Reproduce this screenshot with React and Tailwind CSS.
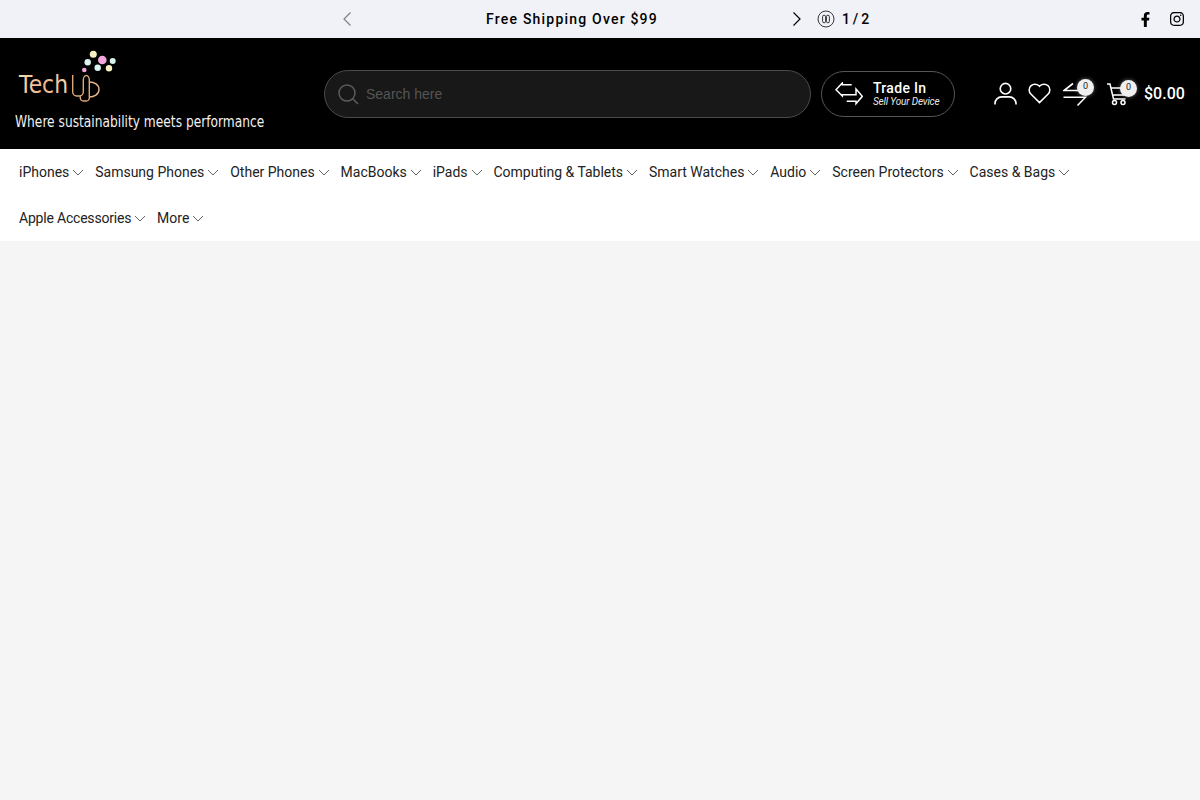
import React from 'react';
import { FaFacebookF, FaInstagram } from 'react-icons/fa';

const navItems = [
  'iPhones', 'Samsung Phones', 'Other Phones', 'MacBooks', 'iPads', 'Computing & Tablets',
  'Smart Watches', 'Audio', 'Screen Protectors', 'Cases & Bags', 'Apple Accessories', 'More',
];

const Chevron = ({ className, d }) => (
  <svg viewBox="0 0 12 16" fill="none" stroke="currentColor" strokeWidth="1.2" className={className}>
    <path d={d} />
  </svg>
);

const Logo = () => (
  <svg viewBox="0 0 104 58" className="w-[104px] h-[58px]" fill="none">
    <defs>
      <linearGradient id="techGrad" x1="0" x2="1" y1="0" y2="0">
        <stop offset="0" stopColor="#f0dfb4" />
        <stop offset="0.5" stopColor="#eeb48c" />
        <stop offset="1" stopColor="#f0d8b8" />
      </linearGradient>
    </defs>
    <circle cx="78.3" cy="6.3" r="3.5" fill="#f7efc0" />
    <circle cx="87.3" cy="12" r="4.3" fill="#f3a6dc" />
    <circle cx="72.7" cy="14.3" r="3.2" fill="#d9f3ef" />
    <circle cx="97.7" cy="13" r="3" fill="#d9f3ef" />
    <circle cx="82.7" cy="19.7" r="3.2" fill="#d9f3ef" />
    <circle cx="94" cy="20.3" r="3.2" fill="#f7efc0" />
    <circle cx="69.3" cy="22" r="2.3" fill="#f3a6dc" />
    <text x="4" y="45" fontFamily="'DejaVu Sans', sans-serif" fontSize="24" fill="url(#techGrad)" textLength="49" lengthAdjust="spacingAndGlyphs">Tech</text>
    <path d="M57.7 27v17a4 4 0 0 0 4 4h2.6a4 4 0 0 0 4-4V32a3 4.5 0 0 1 6 0v18a3 3 0 0 1-3 3h-3a3 3 0 0 1-3-3v-2" stroke="#dca878" strokeWidth="1.4" />
    <path d="M74.3 34c5 0 9.7 2.5 9.7 7.5S79 49 74.3 49" stroke="#e6b688" strokeWidth="1.4" />
  </svg>
);

const App = () => {
  return (
    <div className="min-h-[800px] bg-[#f5f5f5] font-['Roboto',sans-serif]">

      {/* Announcement bar */}
      <div className="h-[38px] bg-[#f0f2f7] flex items-center text-black pl-[341px] pr-[15px]">
        <div className="w-[462px] flex items-center justify-between">
          <Chevron className="w-3 h-4 text-[#808080]" d="M9.5 1.5 3 8l6.5 6.5" />
          <span className="text-sm font-medium tracking-[1.2px]">Free Shipping Over $99</span>
          <Chevron className="w-3 h-4" d="M2.5 1.5 9 8l-6.5 6.5" />
        </div>
        <svg viewBox="0 0 18 18" fill="none" stroke="#222" strokeWidth="0.9" className="w-[18px] h-[18px] ml-[14px]">
          <circle cx="9" cy="9" r="8" />
          <rect x="5.6" y="5.2" width="3" height="7.6" rx="1.5" />
          <rect x="9.4" y="5.2" width="3" height="7.6" rx="1.5" />
        </svg>
        <span className="text-sm font-medium tracking-[1.2px] [word-spacing:-3px] ml-[7px]">1 / 2</span>
        <div className="ml-auto flex items-center gap-[16px]">
          <FaFacebookF className="w-[15px] h-[15px]" />
          <FaInstagram className="w-4 h-4" />
        </div>
      </div>

      {/* Header */}
      <div className="h-[111px] bg-black flex items-center text-white">
        <div className="w-[324px] self-start shrink-0 pl-[15px] pt-[10px]">
          <Logo />
          <div className="font-['DejaVu_Sans_Condensed','DejaVu_Sans',sans-serif] text-base leading-5 text-[#f2f2f2] whitespace-nowrap mt-[6px] origin-left scale-x-[0.85]">
            Where sustainability meets performance
          </div>
        </div>

        <div className="w-[487px] h-[48px] rounded-full bg-[#181818] border border-[#4a4a4a] flex items-center pl-[12px] shrink-0">
          <svg viewBox="0 0 22 22" fill="none" stroke="#5c5c5c" strokeWidth="1.5" className="w-[22px] h-[22px]">
            <circle cx="10" cy="10" r="8" />
            <path d="m16 16 5 5" />
          </svg>
          <span className="ml-[7px] text-sm text-[#555] font-['Liberation_Sans',sans-serif]">Search here</span>
        </div>

        <div className="ml-[10px] w-[134px] h-[46px] rounded-full border border-[#555] flex items-center pl-[13px] shrink-0">
          <svg viewBox="0 0 28 24" fill="none" stroke="white" strokeWidth="1.5" className="w-[28px] h-[24px]">
            <path d="M16.7 2.7H7.3V1L1 7.7 7.3 14v-1.3H21V7l6.3 7.3-6.3 7.4v-2.4h-9.3" />
          </svg>
          <div className="ml-[10px]">
            <div className="text-sm font-medium leading-[16px] tracking-[0.3px]">Trade In</div>
            <div className="text-[10px] italic leading-[12px] tracking-[-0.15px] text-[#e8e8e8]">Sell Your Device</div>
          </div>
        </div>

        <div className="ml-[39px] flex items-center">
          <svg viewBox="0 0 24 24" fill="none" stroke="white" strokeWidth="1.7" className="w-[23px] h-[23px]">
            <circle cx="12" cy="7" r="5.5" />
            <path d="M1 23.5v-1a7 7 0 0 1 7-7h8a7 7 0 0 1 7 7v1" />
          </svg>
          <svg viewBox="0 0 24 24" fill="none" stroke="white" strokeWidth="1.6" className="w-[23px] h-[23px] ml-[11px]">
            <path d="M12 21.5 3 12.5a6 6 0 0 1 0-8.5 6 6 0 0 1 8.5 0l.5.6.5-.6a6 6 0 0 1 8.5 0 6 6 0 0 1 0 8.5z" />
          </svg>
          <div className="relative w-[24px] h-[26px] ml-[12px]">
            <svg viewBox="0 0 24 26" fill="none" stroke="white" strokeWidth="1.6" className="w-[24px] h-[26px]">
              <path d="M10 2.5 1 9.5h14M.5 16.2h22L14.5 24.5" />
            </svg>
            <span className="absolute -top-[2px] left-[14px] w-[17px] h-[17px] rounded-full bg-[#f0f0f0] text-[#222] text-[9px] flex items-center justify-center shadow-[0_0_4px_rgba(255,255,255,0.4)]">0</span>
          </div>
          <div className="relative w-[22px] h-[24px] ml-[19px]">
            <svg viewBox="0 0 22 24" fill="none" stroke="white" strokeWidth="1.5" className="w-[22px] h-[24px]">
              <path d="M1 2h3l3.5 15h12" />
              <path d="M5 6h15l-2 7H6.5" />
              <circle cx="8.5" cy="20.5" r="2" />
              <circle cx="17" cy="20.5" r="2" />
            </svg>
            <span className="absolute -top-[2px] left-[14px] w-[17px] h-[17px] rounded-full bg-[#f0f0f0] text-[#222] text-[9px] flex items-center justify-center shadow-[0_0_4px_rgba(255,255,255,0.4)]">0</span>
          </div>
          <span className="ml-[16px] text-base font-medium">$0.00</span>
        </div>
      </div>

      {/* Nav */}
      <nav className="bg-white flex flex-wrap pl-[19px] pr-[120px] gap-x-[10.9px] text-sm text-[#222]">
        {navItems.map((item) => (
          <a key={item} className="h-[46px] flex items-center gap-[3px]">
            <span className={item === 'Apple Accessories' ? 'tracking-[-0.2px]' : ''}>{item}</span>
            <svg viewBox="0 0 12 7" fill="none" stroke="#555" strokeWidth="0.9" className="w-3 h-[7px]">
              <path d="m1 1 5 5 5-5" />
            </svg>
          </a>
        ))}
      </nav>
    </div>
  );
};

export default App;
